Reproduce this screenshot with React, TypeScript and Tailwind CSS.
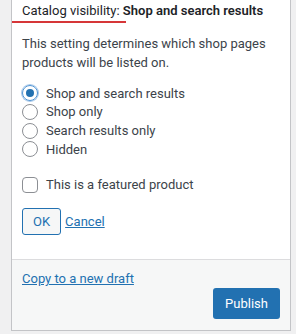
import React, { useState } from 'react';

const options = ['Shop and search results', 'Shop only', 'Search results only', 'Hidden'];

export default function App() {
    const [visibility, setVisibility] = useState(options[0]);
    const [featured, setFeatured] = useState(false);

    return (
        <div className="w-[296px] h-[334px] bg-[#f0f0f1] pl-[11px] pr-[5px] text-[#3c434a] text-[13px] overflow-hidden" style={{ fontFamily: 'Roboto, "Open Sans", sans-serif' }}>
            <div className="bg-white border-x border-b border-[#c3c4c7]">
                <div className="h-[259px] flex flex-col">
                    <div className="relative h-[23px] pl-[10px] leading-[22px] text-[13px] text-[#1d2327] whitespace-nowrap">
                        Catalog visibility: <span className="font-semibold">Shop and search results</span>
                        <div className="absolute left-0 bottom-0 w-[114px] h-[2px] bg-[#d63638]" />
                    </div>

                    <p className="px-[10px] mt-[11px] leading-[19px] text-[13px]">
                        This setting determines which shop pages products will be listed on.
                    </p>

                    <div className="mt-[12px] px-[10px] flex flex-col">
                        {options.map(opt => (
                            <label key={opt} className="h-[18.7px] flex items-center gap-[8px] cursor-pointer">
                                <span
                                    onClick={() => setVisibility(opt)}
                                    className={`w-[16px] h-[16px] rounded-full border flex items-center justify-center shrink-0 ${visibility === opt ? 'border-[#4f94d4] shadow-[0_0_0_1px_#a9c9ea]' : 'border-[#8c8f94]'}`}
                                >
                                    {visibility === opt && <span className="w-[8px] h-[8px] rounded-full bg-[#2271b1]" />}
                                </span>
                                <span onClick={() => setVisibility(opt)} className="text-[13px]">{opt}</span>
                            </label>
                        ))}
                    </div>

                    <label className="mt-[17px] px-[10px] h-[18px] flex items-center gap-[8px] cursor-pointer">
                        <span
                            onClick={() => setFeatured(!featured)}
                            className="w-[16px] h-[16px] rounded-[4px] border border-[#8c8f94] shrink-0 flex items-center justify-center text-[#2271b1] text-[12px]"
                        >
                            {featured ? '✓' : ''}
                        </span>
                        <span onClick={() => setFeatured(!featured)} className="text-[13px]">This is a featured product</span>
                    </label>

                    <div className="mt-[14px] px-[10px] flex items-center gap-[4px]">
                        <button className="h-[27px] px-[10px] border border-[#2271b1] rounded-[3px] bg-[#f6f7f7] text-[#2271b1] text-[13px]">
                            OK
                        </button>
                        <a href="#" className="text-[#2271b1] underline text-[13px]">Cancel</a>
                    </div>
                </div>

                <div className="h-[71px] bg-[#f6f7f7] border-t border-[#dcdcde] px-[10px] pt-[9px] flex flex-col">
                    <a href="#" className="text-[#2271b1] underline text-[13px] leading-[19px] self-start">Copy to a new draft</a>
                    <div className="flex justify-end">
                        <button className="h-[31px] w-[67px] bg-[#2271b1] text-white rounded-[3px] text-[13px]">
                            Publish
                        </button>
                    </div>
                </div>
            </div>
        </div>
    );
}
